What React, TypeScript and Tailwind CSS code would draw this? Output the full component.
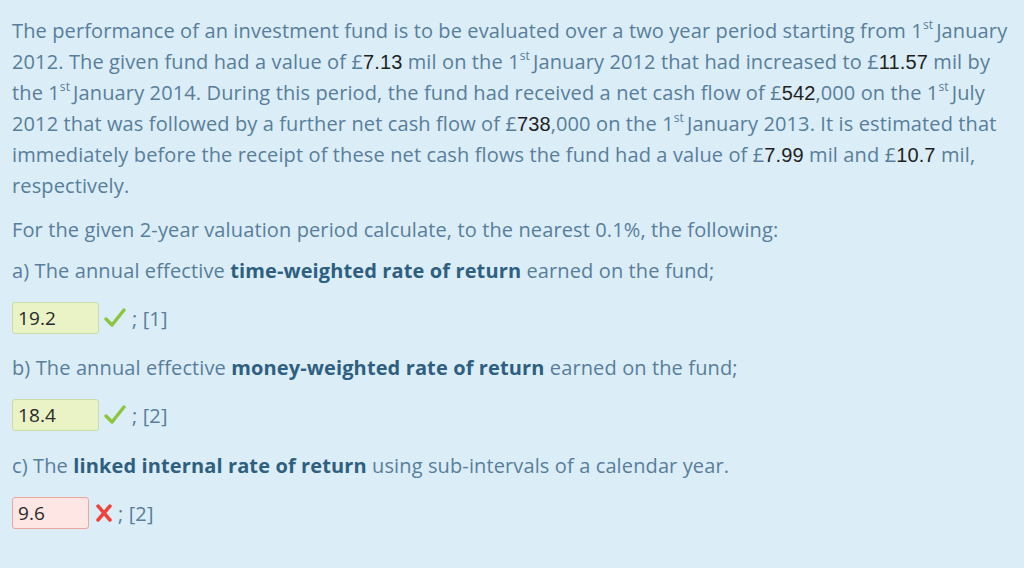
import React from 'react';

const Num = ({ children }: { children: React.ReactNode }) => (
  <span className="text-[#1f1f1f] text-[20px] leading-none" style={{ fontFamily: '"Liberation Sans", Arial, sans-serif' }}>
    {children}
  </span>
);

const St = () => <sup className="text-[12px] leading-none -top-[9px] mr-[3px]">st</sup>;

function Answer({ value, ok, mark, width }: { value: string; ok: boolean; mark: string; width: string }) {
  return (
    <div className="flex items-center h-[32px]">
      <div
        className={
          ok
            ? 'h-[32px] flex items-center pl-[5px] rounded-[3px] border border-[#c8dba9] bg-[#e9f3c6] text-[#2a2a2a] text-[19px] ' + width
            : 'h-[32px] flex items-center pl-[5px] rounded-[3px] border border-[#eea79d] bg-[#fde6e3] text-[#2a2a2a] text-[19px] ' + width
        }
      >
        {value}
      </div>
      {ok ? (
        <svg width="24" height="22" viewBox="0 0 24 22" className="ml-[4px]">
          <path d="M3 12 L9 18 L21 3" fill="none" stroke="#8cc63f" strokeWidth="3.5" strokeLinecap="round" strokeLinejoin="round" />
        </svg>
      ) : (
        <svg width="18" height="18" viewBox="0 0 18 18" className="ml-[6px]">
          <path d="M3 2 L15 16 M15 2 L3 16" stroke="#f2433a" strokeWidth="3.5" strokeLinecap="round" />
        </svg>
      )}
      <span className="ml-[5px]">{mark}</span>
    </div>
  );
}

export default function App() {
  return (
    <div
      className="w-[1024px] h-[568px] bg-[#dbedf7] text-[#587e9b] text-[20px] leading-[31px] tracking-[0.12px] pl-[12px] pr-[4px] pt-[15px] overflow-hidden"
      style={{ fontFamily: '"Open Sans", sans-serif' }}
    >
      <p className="whitespace-nowrap">
        The performance of an investment fund is to be evaluated over a two year period starting from 1<St />January
        <br />
        2012. The given fund had a value of £<Num>7.13</Num> mil on the 1<St />January 2012 that had increased to £<Num>11.57</Num> mil by
        <br />
        the 1<St />January 2014. During this period, the fund had received a net cash flow of £<Num>542</Num>,000 on the 1<St />July
        <br />
        2012 that was followed by a further net cash flow of £<Num>738</Num>,000 on the 1<St />January 2013. It is estimated that
        <br />
        immediately before the receipt of these net cash flows the fund had a value of £<Num>7.99</Num> mil and £<Num>10.7</Num> mil,
        <br />
        respectively.
      </p>
      <p className="mt-[13px]">For the given 2-year valuation period calculate, to the nearest 0.1%, the following:</p>
      <p className="mt-[10px]">
        a) The annual effective <b className="font-bold text-[#2e5f80]">time-weighted rate of return</b> earned on the fund;
      </p>
      <div className="mt-[16px]">
        <Answer value="19.2" ok mark="; [1]" width="w-[87px]" />
      </div>
      <p className="mt-[18px]">
        b) The annual effective <b className="font-bold text-[#2e5f80]">money-weighted rate of return</b> earned on the fund;
      </p>
      <div className="mt-[16px]">
        <Answer value="18.4" ok mark="; [2]" width="w-[87px]" />
      </div>
      <p className="mt-[19px]">
        c) The <b className="font-bold text-[#2e5f80]">linked internal rate of return</b> using sub-intervals of a calendar year.
      </p>
      <div className="mt-[16px]">
        <Answer value="9.6" ok={false} mark="; [2]" width="w-[77px]" />
      </div>
    </div>
  );
}
